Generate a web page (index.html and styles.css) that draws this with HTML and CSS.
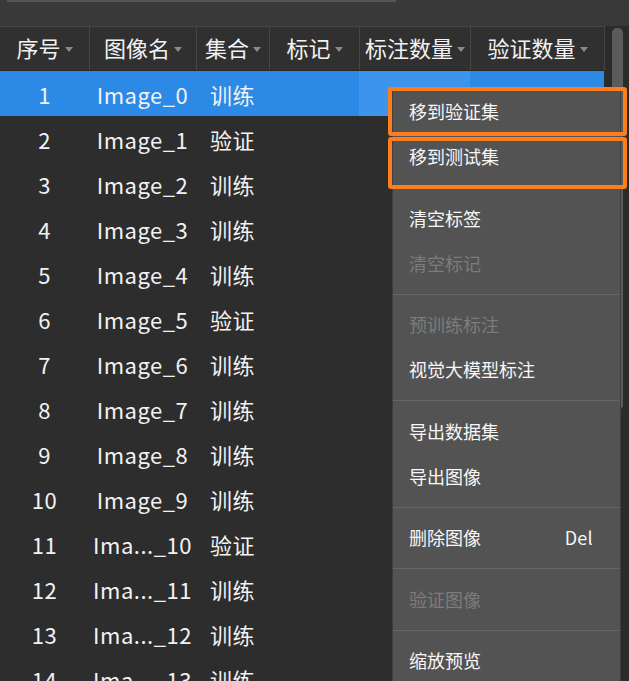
FILE: index.html
```html
<!DOCTYPE html>
<html lang="zh-CN">
<head>
<meta charset="utf-8">
<title>图像列表</title>
<link rel="stylesheet" href="styles.css">
</head>
<body>
<div class="topbar"><div class="search"></div></div>
<div class="main">
  <div class="table">
    <div class="thead">
      <div class="th">序号<span class="caret"></span></div>
      <div class="th">图像名<span class="caret"></span></div>
      <div class="th">集合<span class="caret"></span></div>
      <div class="th">标记<span class="caret"></span></div>
      <div class="th">标注数量<span class="caret"></span></div>
      <div class="th">验证数量<span class="caret"></span></div>
    </div>
    <div class="tbody">
      <div class="row sel"><div class="td">1</div><div class="td">Image_0</div><div class="td">训练</div><div class="td"></div><div class="td hl"></div><div class="td"></div></div>
      <div class="row"><div class="td">2</div><div class="td">Image_1</div><div class="td">验证</div><div class="td"></div><div class="td"></div><div class="td"></div></div>
      <div class="row"><div class="td">3</div><div class="td">Image_2</div><div class="td">训练</div><div class="td"></div><div class="td"></div><div class="td"></div></div>
      <div class="row"><div class="td">4</div><div class="td">Image_3</div><div class="td">训练</div><div class="td"></div><div class="td"></div><div class="td"></div></div>
      <div class="row"><div class="td">5</div><div class="td">Image_4</div><div class="td">训练</div><div class="td"></div><div class="td"></div><div class="td"></div></div>
      <div class="row"><div class="td">6</div><div class="td">Image_5</div><div class="td">验证</div><div class="td"></div><div class="td"></div><div class="td"></div></div>
      <div class="row"><div class="td">7</div><div class="td">Image_6</div><div class="td">训练</div><div class="td"></div><div class="td"></div><div class="td"></div></div>
      <div class="row"><div class="td">8</div><div class="td">Image_7</div><div class="td">训练</div><div class="td"></div><div class="td"></div><div class="td"></div></div>
      <div class="row"><div class="td">9</div><div class="td">Image_8</div><div class="td">训练</div><div class="td"></div><div class="td"></div><div class="td"></div></div>
      <div class="row"><div class="td">10</div><div class="td">Image_9</div><div class="td">训练</div><div class="td"></div><div class="td"></div><div class="td"></div></div>
      <div class="row"><div class="td">11</div><div class="td">Ima..._10</div><div class="td">验证</div><div class="td"></div><div class="td"></div><div class="td"></div></div>
      <div class="row"><div class="td">12</div><div class="td">Ima..._11</div><div class="td">训练</div><div class="td"></div><div class="td"></div><div class="td"></div></div>
      <div class="row"><div class="td">13</div><div class="td">Ima..._12</div><div class="td">训练</div><div class="td"></div><div class="td"></div><div class="td"></div></div>
      <div class="row"><div class="td">14</div><div class="td">Ima..._13</div><div class="td">训练</div><div class="td"></div><div class="td"></div><div class="td"></div></div>
    </div>
  </div>
  <div class="scroll"><div class="thumb"></div></div>
</div>

<div class="menu">
  <div class="mi">移到验证集</div>
  <div class="mi">移到测试集</div>
  <div class="sep"></div>
  <div class="mi">清空标签</div>
  <div class="mi dis">清空标记</div>
  <div class="sep"></div>
  <div class="mi dis">预训练标注</div>
  <div class="mi">视觉大模型标注</div>
  <div class="sep"></div>
  <div class="mi">导出数据集</div>
  <div class="mi">导出图像</div>
  <div class="sep"></div>
  <div class="mi"><span>删除图像</span><span class="key">Del</span></div>
  <div class="sep"></div>
  <div class="mi dis">验证图像</div>
  <div class="sep"></div>
  <div class="mi">缩放预览</div>
</div>
<div class="mark mark1"></div>
<div class="mark mark2"></div>
</body>
</html>
```

FILE: styles.css
```css
* { box-sizing: border-box; }
html, body { margin: 0; padding: 0; }
body {
  width: 629px;
  height: 681px;
  overflow: hidden;
  position: relative;
  background: #2d2d2d;
  color: #f2f2f2;
  font-family: "Noto Sans CJK SC", "Noto Sans", sans-serif;
}

.topbar {
  height: 26px;
  background: #393939;
  padding-left: 7px;
}
.search {
  width: 389px;
  height: 2px;
  background: #565656;
}

.main {
  display: flex;
  height: 655px;
}
.table { width: 605px; }

.thead, .row {
  display: grid;
  grid-template-columns: 89px 107px 73px 90px 111px 134px;
}
.thead {
  height: 45px;
  background: #303030;
  border-top: 1px solid #464646;
  border-right: 1px solid #464646;
  border-bottom: 1px solid #262626;
}
.th {
  display: flex;
  align-items: center;
  justify-content: center;
  font-size: 22px;
  border-left: 1px solid #464646;
  padding-bottom: 3px;
}
.th:first-child { border-left: none; }
.caret {
  width: 0;
  height: 0;
  margin-left: 4px;
  margin-top: 5px;
  border-left: 4px solid transparent;
  border-right: 4px solid transparent;
  border-top: 5px solid #8a8a8a;
}

.row { height: 45px; width: 604px; }
.row.sel { background: #2c89e6; }
.td {
  display: flex;
  align-items: center;
  justify-content: center;
  font-size: 22px;
  letter-spacing: 0.5px;
  white-space: nowrap;
}
.td.hl { background: #3c94ec; }

.scroll {
  width: 24px;
  padding: 2px 6px 0 7px;
  background: #2b2b2b;
}
.thumb {
  height: 382px;
  background: #5b5b5b;
  border-radius: 5px;
}

.menu {
  position: absolute;
  left: 392px;
  top: 89px;
  width: 229px;
  background: #535353;
  border: 1px solid #3e3e3e;
  border-bottom: none;
}
.mi {
  height: 45px;
  display: flex;
  align-items: center;
  justify-content: space-between;
  padding: 0 27px 3px 16px;
  font-size: 18px;
  color: #f7f7f7;
}
.mi.dis { color: #7c7c7c; }
.key { font-size: 18px; letter-spacing: 0.3px; }
.sep {
  height: 1px;
  background: #666666;
  margin: 7px 0 8.5px;
}

.mark {
  position: absolute;
  left: 388px;
  width: 239px;
  border: 4px solid #fe7e1d;
  border-radius: 3px;
}
.mark1 { top: 87px; height: 49px; }
.mark2 { top: 137px; height: 52px; }
```
